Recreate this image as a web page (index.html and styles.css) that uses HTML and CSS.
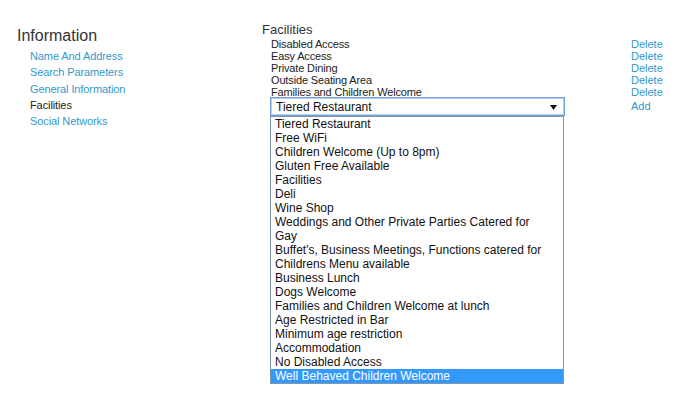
FILE: index.html
```html
<!DOCTYPE html>
<html lang="en">
<head>
    <meta charset="UTF-8">
    <title>Facilities</title>
    <link rel="stylesheet" href="styles.css">
</head>
<body>

    <div class="page">
        <aside class="sidebar">
            <h2>Information</h2>
            <ul class="nav">
                <li><a href="#">Name And Address</a></li>
                <li><a href="#">Search Parameters</a></li>
                <li><a href="#">General Information</a></li>
                <li class="active">Facilities</li>
                <li><a href="#">Social Networks</a></li>
            </ul>
        </aside>

        <main class="facilities">
            <h3>Facilities</h3>
            <ul class="facility-list">
                <li><span>Disabled Access</span><a href="#">Delete</a></li>
                <li><span>Easy Access</span><a href="#">Delete</a></li>
                <li><span>Private Dining</span><a href="#">Delete</a></li>
                <li><span>Outside Seating Area</span><a href="#">Delete</a></li>
                <li><span>Families and Children Welcome</span><a href="#">Delete</a></li>
            </ul>

            <div class="add-row">
                <div class="select-wrap">
                    <div class="select">
                        <span class="select-value">Tiered Restaurant</span>
                        <svg class="select-arrow" width="7" height="5" viewBox="0 0 7 5"><polygon points="0,0 7,0 3.5,5" fill="#111"/></svg>
                    </div>
                    <div class="options">
                        <div class="option">Tiered Restaurant</div>
                        <div class="option">Free WiFi</div>
                        <div class="option">Children Welcome (Up to 8pm)</div>
                        <div class="option">Gluten Free Available</div>
                        <div class="option">Facilities</div>
                        <div class="option">Deli</div>
                        <div class="option">Wine Shop</div>
                        <div class="option">Weddings and Other Private Parties Catered for</div>
                        <div class="option">Gay</div>
                        <div class="option">Buffet's, Business Meetings, Functions catered for</div>
                        <div class="option">Childrens Menu available</div>
                        <div class="option">Business Lunch</div>
                        <div class="option">Dogs Welcome</div>
                        <div class="option">Families and Children Welcome at lunch</div>
                        <div class="option">Age Restricted in Bar</div>
                        <div class="option">Minimum age restriction</div>
                        <div class="option">Accommodation</div>
                        <div class="option">No Disabled Access</div>
                        <div class="option selected">Well Behaved Children Welcome</div>
                    </div>
                </div>
                <a href="#" class="add-link">Add</a>
            </div>
        </main>
    </div>

</body>
</html>
```

FILE: styles.css
```css
* {
    margin: 0;
    padding: 0;
    box-sizing: border-box;
    font-family: 'Liberation Sans', Arial, sans-serif;
}

body {
    background: #fff;
    color: #333;
    min-height: 400px;
}

a {
    color: #3399cc;
    text-decoration: none;
}

ul {
    list-style: none;
}

.page {
    display: flex;
    padding: 22px 0 0 17px;
}

/* Sidebar */
.sidebar {
    width: 245px;
    padding-top: 4px;
}

.sidebar h2 {
    font-size: 16px;
    font-weight: normal;
    line-height: 20px;
    color: #333;
}

.nav {
    margin-top: 2px;
    padding-left: 13px;
}

.nav li {
    font-size: 11px;
    line-height: 16.25px;
    letter-spacing: -0.1px;
}

.nav .active {
    color: #222;
}

/* Facilities */
.facilities h3 {
    font-size: 13px;
    font-weight: normal;
    line-height: 16px;
    color: #333;
}

.facility-list li {
    display: grid;
    grid-template-columns: 360px auto;
    padding-left: 9px;
    font-size: 11px;
    line-height: 12px;
    color: #222;
}

.facility-list span {
    letter-spacing: -0.15px;
}

.add-row {
    display: flex;
    align-items: flex-start;
    margin-top: -1px;
    padding-left: 8px;
}

.select-wrap {
    width: 295px;
}

.select {
    height: 19px;
    border: 1px solid #6f9fd8;
    box-shadow: inset 0 0 0 1px #b7d0f0;
    display: flex;
    align-items: center;
    justify-content: space-between;
    padding: 1px 7px 0 5px;
    font-size: 12px;
    color: #111;
}

.select-arrow {
    display: block;
}

.options {
    width: 294px;
    background: #fff;
    border: 1px solid #8394ad;
}

.option {
    font-size: 12px;
    line-height: 14px;
    padding-left: 4px;
    color: #111;
    white-space: nowrap;
}

.option.selected {
    background: #3399ff;
    color: #fff;
}

.add-link {
    margin-left: 66px;
    font-size: 11px;
    line-height: 19px;
}
```
